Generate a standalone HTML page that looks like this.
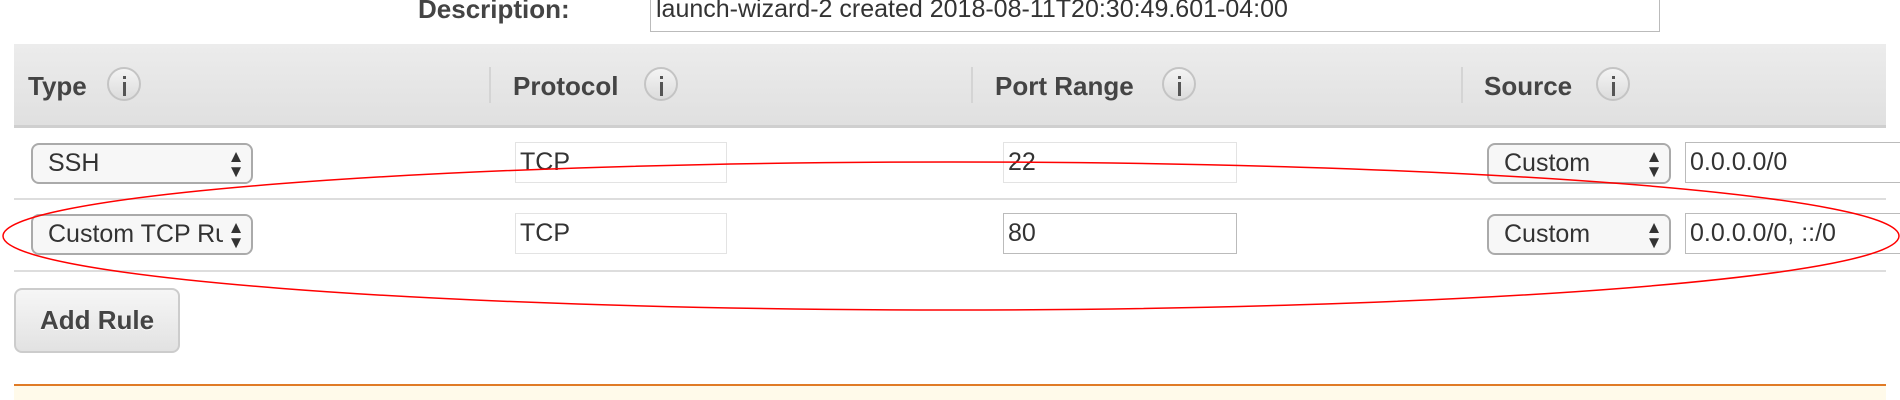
<!DOCTYPE html>
<html><head><meta charset="utf-8"><style>
*{margin:0;padding:0;box-sizing:border-box}
body{width:1900px;height:400px;overflow:hidden;background:#fff;font-family:"Liberation Sans",Arial,sans-serif;color:#444;position:relative}
.a{position:absolute}
.lbl{font-weight:bold;font-size:26px;color:#444}
.hdr{left:14px;top:44px;width:1872px;height:84px;background:linear-gradient(#ececec,#e0e0e0);border-bottom:3px solid #cfcfcf}
.sep{width:2px;height:36px;top:67px;background:#d4d4d4}
.info{width:34px;height:34px;border:2px solid #c4c4c4;border-radius:50%;top:67px;background:linear-gradient(#f4f4f4,#dcdcdc)}
.info:after{content:"";position:absolute;left:14px;top:13px;width:3px;height:14px;background:#555}
.info:before{content:"";position:absolute;left:14px;top:7px;width:3px;height:3px;background:#555}
.sel{border:2px solid #aaa;border-radius:8px;background:#f7f7f7;font-size:25px;line-height:37px;padding-left:15px;color:#333;overflow:hidden;white-space:nowrap}
.sel span{position:absolute;right:2px;top:0;width:26px;height:37px;background:#f7f7f7;font-size:17px;line-height:15px;text-align:center;padding-top:4px;color:#333}
.inp{border:1px solid #bbb;font-size:25px;line-height:38px;padding-left:4px;color:#333;background:#fff}
.dis{border-color:#e3e3e3}
.row{left:14px;width:1872px;height:2px;background:#ddd}
</style></head><body>
<div class="a lbl" style="left:418px;top:-6px;font-size:26px">Description:</div>
<div class="a inp" style="left:650px;top:-12px;width:1010px;height:44px;line-height:40px;padding-left:5px;font-size:25px">launch-wizard-2 created 2018-08-11T20:30:49.601-04:00</div>

<div class="a hdr"></div>
<div class="a lbl" style="left:28px;top:71px">Type</div><div class="a info" style="left:107px"></div>
<div class="a sep" style="left:489px"></div>
<div class="a lbl" style="left:513px;top:71px">Protocol</div><div class="a info" style="left:644px"></div>
<div class="a sep" style="left:971px"></div>
<div class="a lbl" style="left:995px;top:71px">Port Range</div><div class="a info" style="left:1162px"></div>
<div class="a sep" style="left:1461px"></div>
<div class="a lbl" style="left:1484px;top:71px">Source</div><div class="a info" style="left:1596px"></div>

<div class="a sel" style="left:31px;top:143px;width:222px;height:41px">SSH<span>▲<br>▼</span></div>
<div class="a inp dis" style="left:515px;top:142px;width:212px;height:41px">TCP</div>
<div class="a inp dis" style="left:1003px;top:142px;width:234px;height:41px">22</div>
<div class="a sel" style="left:1487px;top:143px;width:184px;height:41px">Custom<span>▲<br>▼</span></div>
<div class="a inp" style="left:1685px;top:142px;width:220px;height:41px">0.0.0.0/0</div>
<div class="a row" style="top:198px"></div>

<div class="a sel" style="left:31px;top:214px;width:222px;height:41px">Custom TCP Rule<span>▲<br>▼</span></div>
<div class="a inp dis" style="left:515px;top:213px;width:212px;height:41px">TCP</div>
<div class="a inp" style="left:1003px;top:213px;width:234px;height:41px">80</div>
<div class="a sel" style="left:1487px;top:214px;width:184px;height:41px">Custom<span>▲<br>▼</span></div>
<div class="a inp" style="left:1685px;top:213px;width:220px;height:41px">0.0.0.0/0, ::/0</div>
<div class="a row" style="top:270px"></div>

<div class="a lbl" style="left:14px;top:288px;width:166px;height:65px;border:2px solid #ccc;border-radius:8px;background:linear-gradient(#f6f6f6,#e2e2e2);text-align:center;line-height:61px;font-size:26px;text-shadow:0 1px 0 #fff">Add Rule</div>

<div class="a" style="left:14px;top:384px;width:1872px;height:16px;background:#fffaea;border-top:2px solid #e07b26"></div>

<svg class="a" style="left:0;top:0" width="1900" height="400"><ellipse cx="951" cy="236" rx="948" ry="74" fill="none" stroke="#f00" stroke-width="1.5"/></svg>
</body></html>
